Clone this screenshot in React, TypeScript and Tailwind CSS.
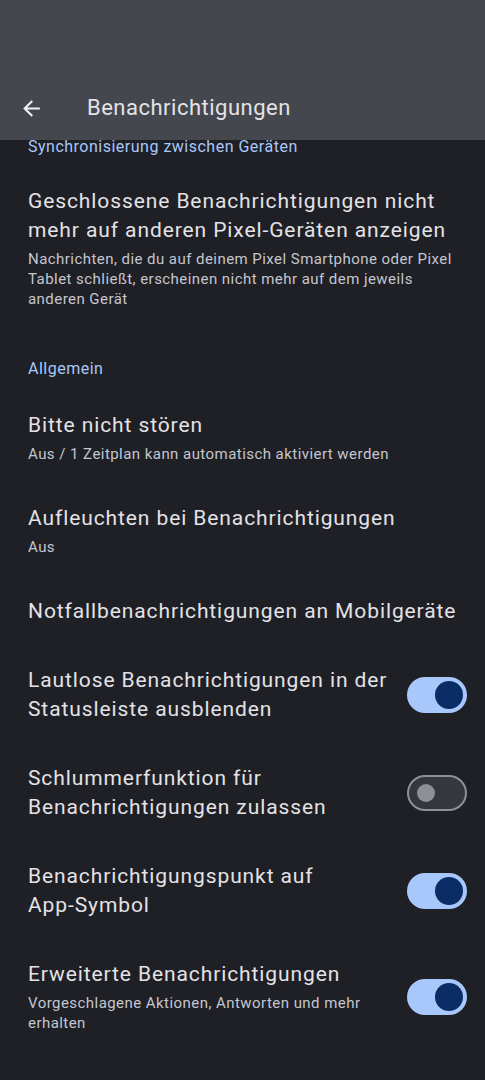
import React from 'react';

const FONT = { fontFamily: 'Roboto, "Noto Sans", sans-serif' };

type Eintrag = {
  titel: string;
  text?: string;
  schalter?: boolean;
};

const allgemein: Eintrag[] = [
  { titel: 'Bitte nicht stören', text: 'Aus / 1 Zeitplan kann automatisch aktiviert werden' },
  { titel: 'Aufleuchten bei Benachrichtigungen', text: 'Aus' },
  { titel: 'Notfallbenachrichtigungen an Mobilgeräte' },
  { titel: 'Lautlose Benachrichtigungen in der Statusleiste ausblenden', schalter: true },
  { titel: 'Schlummerfunktion für Benachrichtigungen zulassen', schalter: false },
  { titel: 'Benachrichtigungspunkt auf App-Symbol', schalter: true },
  { titel: 'Erweiterte Benachrichtigungen', text: 'Vorgeschlagene Aktionen, Antworten und mehr erhalten', schalter: true },
];

// Wörter mit Bindestrich nicht am Bindestrich umbrechen
function ohneTrennung(s: string) {
  return s.split(' ').map((w, i) => (
    <React.Fragment key={i}>
      {i > 0 && ' '}
      {w.includes('-') ? <span className="whitespace-nowrap">{w}</span> : w}
    </React.Fragment>
  ));
}

function Schalter({ an }: { an: boolean }) {
  if (an) {
    return (
      <span className="flex h-[36px] w-[60px] shrink-0 items-center justify-end rounded-full bg-[#a8c7fa] pr-[4px]">
        <span className="h-[28px] w-[28px] rounded-full bg-[#0a2d66]" />
      </span>
    );
  }
  return (
    <span className="flex h-[36px] w-[60px] shrink-0 items-center rounded-full border-2 border-[#8e9099] bg-[#36373c] pl-[8px]">
      <span className="h-[18px] w-[18px] rounded-full bg-[#8e9099]" />
    </span>
  );
}

function Zeile({ titel, text, schalter }: Eintrag) {
  const mitSchalter = schalter !== undefined;
  return (
    <div className="flex items-center py-[20px] pl-[28px] pr-[18px]">
      <div className={mitSchalter ? 'w-[363px] min-w-0' : 'min-w-0 flex-1'}>
        <p className="text-[21px] leading-[29px] tracking-[0.9px] text-[#e3e2e6]">{ohneTrennung(titel)}</p>
        {text && <p className="mt-[4px] text-[15px] leading-[20px] tracking-[0.45px] text-[#c4c6d0]">{text}</p>}
      </div>
      {mitSchalter && (
        <div className="ml-auto">
          <Schalter an={schalter} />
        </div>
      )}
    </div>
  );
}

export default function App() {
  return (
    <main className="min-h-[1080px] w-[485px] overflow-hidden bg-[#1f2025]" style={FONT}>
      <header className="flex h-[140px] items-end bg-[#45474e] pb-[18px]">
        <div className="flex h-[28px] items-center">
          <svg viewBox="0 0 24 24" className="ml-[19px] h-[25px] w-[25px]" fill="#f1f0f4">
            <path d="M20 11H7.83l5.59-5.59L12 4l-8 8 8 8 1.41-1.41L7.83 13H20v-2z" />
          </svg>
          <h1 className="ml-[43px] text-[22px] leading-[28px] tracking-[0.5px] text-[#e3e2e6]">Benachrichtigungen</h1>
        </div>
      </header>

      <p className="pl-[28px] text-[16px] leading-[14px] tracking-[0.5px] text-[#a8c7fa]">Synchronisierung zwischen Geräten</p>
      <div className="mt-[13px]">
        <Zeile
          titel="Geschlossene Benachrichtigungen nicht mehr auf anderen Pixel-Geräten anzeigen"
          text="Nachrichten, die du auf deinem Pixel Smartphone oder Pixel Tablet schließt, erscheinen nicht mehr auf dem jeweils anderen Gerät"
        />
      </div>

      <p className="mt-[30px] pb-[12px] pl-[28px] text-[16px] leading-[20px] tracking-[0.5px] text-[#a8c7fa]">Allgemein</p>
      {allgemein.map((e) => (
        <Zeile key={e.titel} {...e} />
      ))}
    </main>
  );
}
